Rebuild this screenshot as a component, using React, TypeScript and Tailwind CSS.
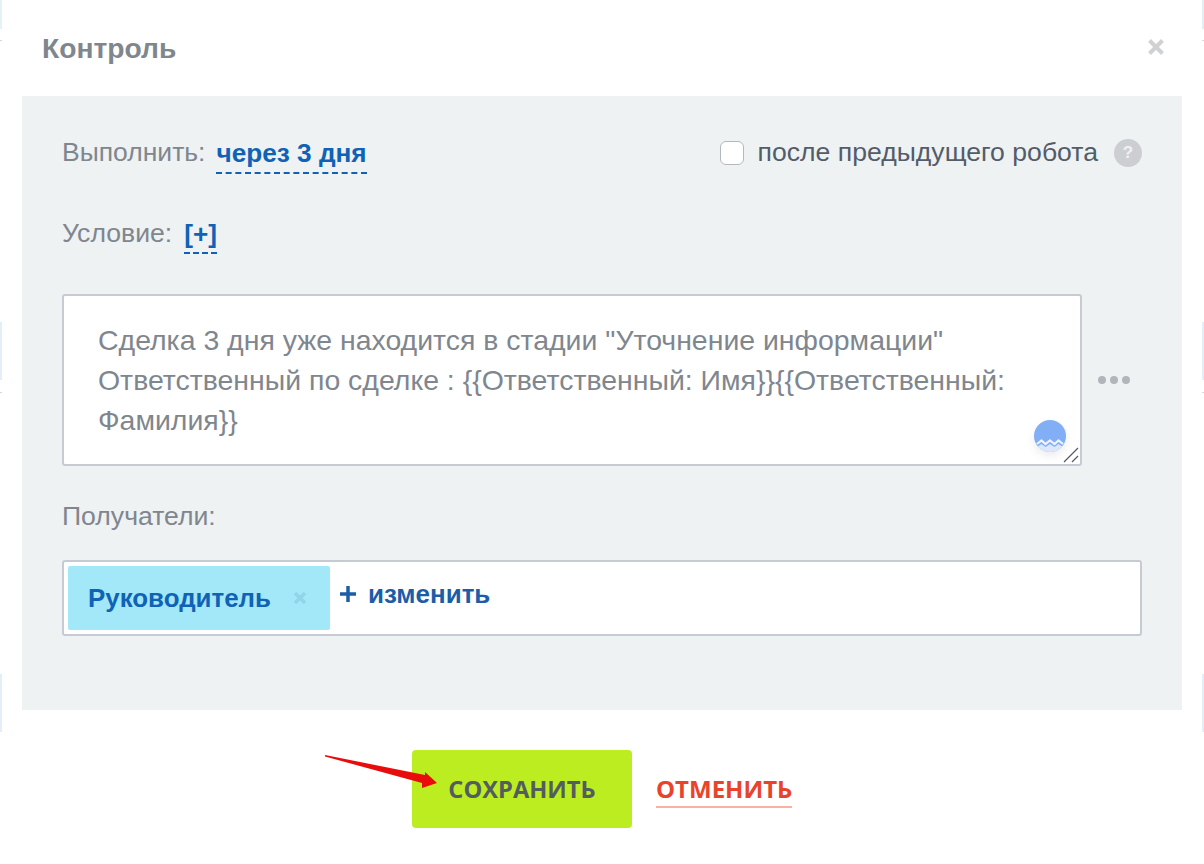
function SideStrip({ right }: { right?: boolean }) {
  return (
    <div className="w-[2px] h-[864px] flex flex-col bg-white">
      <div className={right ? 'h-[29px] bg-[#e4eef5]' : 'h-[29px] bg-[#e4f2f8]'} />
      <div className="h-[11px] bg-[#ffffff]" />
      <div className="h-[1px] bg-[#d5d7da]" />
      <div className="h-[281px] bg-white" />
      <div className="h-[58px] bg-[#e4eef8]" />
      <div className="h-[12px] bg-white" />
      <div className="h-[1px] bg-[#d5d7da]" />
      <div className="h-[281px] bg-white" />
      <div className="h-[58px] bg-[#e4eef8]" />
    </div>
  );
}

export default function App() {
  return (
    <div className="relative w-[1204px] h-[864px] overflow-hidden flex bg-white font-['Liberation_Sans',sans-serif]">
      <SideStrip />

      {/* Dialog */}
      <div className="w-[1200px] h-[864px] flex flex-col bg-white">
        <div className="h-[96px] flex items-center justify-between pl-[40px] pr-[38px]">
          <h1 className="text-[28.2px] font-bold text-[#80868e] leading-none mt-[1px]">Контроль</h1>
          <svg width="16" height="16" viewBox="0 0 16 16" className="text-[#cfd1d3] -mt-[2px]">
            <path d="M1.5 1.5l13 13M14.5 1.5l-13 13" stroke="currentColor" strokeWidth="4" />
          </svg>
        </div>

        <div className="mx-[20px] h-[614px] bg-[#eef2f3] px-[40px] pt-[39px] flex flex-col">
          <div className="h-[36px] flex items-center justify-between">
            <div className="flex items-center gap-[11px]">
              <span className="text-[26.5px] text-[#80868e]">Выполнить:</span>
              <span className="text-[26.2px] font-bold text-[#0f62b5] border-b-2 border-dashed border-[#0f62b5] h-[38px] leading-[34px] mt-[4px]">
                через 3 дня
              </span>
            </div>
            <div className="flex items-center">
              <span className="w-[24px] h-[24px] rounded-[6px] border border-[#b4b8bc] bg-white" />
              <span className="ml-[14px] text-[26.6px] text-[#535c69]">после предыдущего робота</span>
              <span className="ml-[16px] w-[28px] h-[28px] rounded-full bg-[#cdced2] flex items-center justify-center text-[17px] font-bold text-[#eef2f3]">
                ?
              </span>
            </div>
          </div>

          <div className="mt-[45px] flex items-center gap-[12px] h-[36px]">
            <span className="text-[26.6px] text-[#80868e]">Условие:</span>
            <span className="text-[26.2px] font-bold text-[#0f62b5] border-b-2 border-dashed border-[#0f62b5] h-[37px] leading-[34px] mt-[3px]">
              [+]
            </span>
          </div>

          <div className="mt-[42px] flex items-center">
            <div className="relative w-[1020px] h-[172px] bg-white border-2 border-[#c6cbd3] rounded-[3px] pl-[34px] pr-[20px] pt-[24px] text-[28.45px] leading-[40px] text-[#80868e] whitespace-nowrap">
              <p>Сделка 3 дня уже находится в стадии "Уточнение информации"</p>
              <p>Ответственный по сделке : {'{{'}Ответственный: Имя{'}}{{'}Ответственный:</p>
              <p>Фамилия{'}}'}</p>
              <div className="absolute right-[14px] bottom-[12px] w-[32px] h-[32px] rounded-full bg-[#82aef5] overflow-hidden shadow-[0_4px_10px_rgba(0,0,0,0.08)]">
                <svg width="32" height="32" viewBox="0 0 32 32">
                  <path d="M3 24l4.5-3.5 4 3.5 4.5-3.5 4.5 3.5 4-3.5 4.5 3.5" fill="none" stroke="#eef4fe" strokeWidth="2.2" />
                  <path d="M3 27l4.5-3 4 3 4.5-3 4.5 3 4-3 4.5 3V32H3z" fill="#dbe7fb" />
                </svg>
              </div>
              <svg width="16" height="16" viewBox="0 0 16 16" className="absolute right-[1px] bottom-[1px] text-[#555a60]">
                <path d="M1 15L15 1M9 15l6-6" stroke="currentColor" strokeWidth="1.2" />
              </svg>
            </div>
            <div className="ml-[16px] flex gap-[4px]">
              <span className="w-[8px] h-[8px] rounded-full bg-[#b2b5ba]" />
              <span className="w-[8px] h-[8px] rounded-full bg-[#b2b5ba]" />
              <span className="w-[8px] h-[8px] rounded-full bg-[#b2b5ba]" />
            </div>
          </div>

          <div className="mt-[33px] h-[36px] flex items-center text-[26.6px] text-[#80868e]">Получатели:</div>

          <div className="mt-[25px] h-[76px] bg-white border-2 border-[#c6cbd3] rounded-[3px] p-[4px] flex items-start">
            <div className="w-[262px] h-[64px] bg-[#a3e8f8] rounded-[2px] pl-[20px] pr-[23px] flex items-center justify-between">
              <span className="text-[25.9px] font-bold text-[#0f62b5] mt-[1px]">Руководитель</span>
              <svg width="14" height="14" viewBox="0 0 14 14" className="text-[#8fd6e8]">
                <path d="M2 2l10 10M12 2L2 12" stroke="currentColor" strokeWidth="3.5" />
              </svg>
            </div>
            <div className="ml-[10px] h-[56px] flex items-center text-[#1c5da8]">
              <svg width="16" height="16" viewBox="0 0 16 16">
                <path d="M8 0v16M0 8h16" stroke="currentColor" strokeWidth="3.5" />
              </svg>
              <span className="ml-[12px] text-[26px] font-bold">изменить</span>
            </div>
          </div>
        </div>

        <div className="pt-[40px] pl-[410px] flex items-center font-['Open_Sans',sans-serif]">
          <button className="w-[220px] h-[78px] bg-[#bbed21] rounded-[4px] pt-[2px] text-[23.7px] font-bold text-[#535c5f]">СОХРАНИТЬ</button>
          <span className="ml-[24px] mt-[2px] text-[24px] font-bold text-[#e9442b] border-b-2 border-[#fbb0a6] leading-[34px]">ОТМЕНИТЬ</span>
        </div>
      </div>

      <SideStrip right />

      {/* Annotation arrow */}
      <svg width="120" height="40" viewBox="0 0 120 40" className="absolute left-[322px] top-[752px]">
        <path d="M3 3L103 23L103 20L115 31L100 36L100 31L3 4.5Z" fill="#e80c0c" />
      </svg>
    </div>
  );
}
